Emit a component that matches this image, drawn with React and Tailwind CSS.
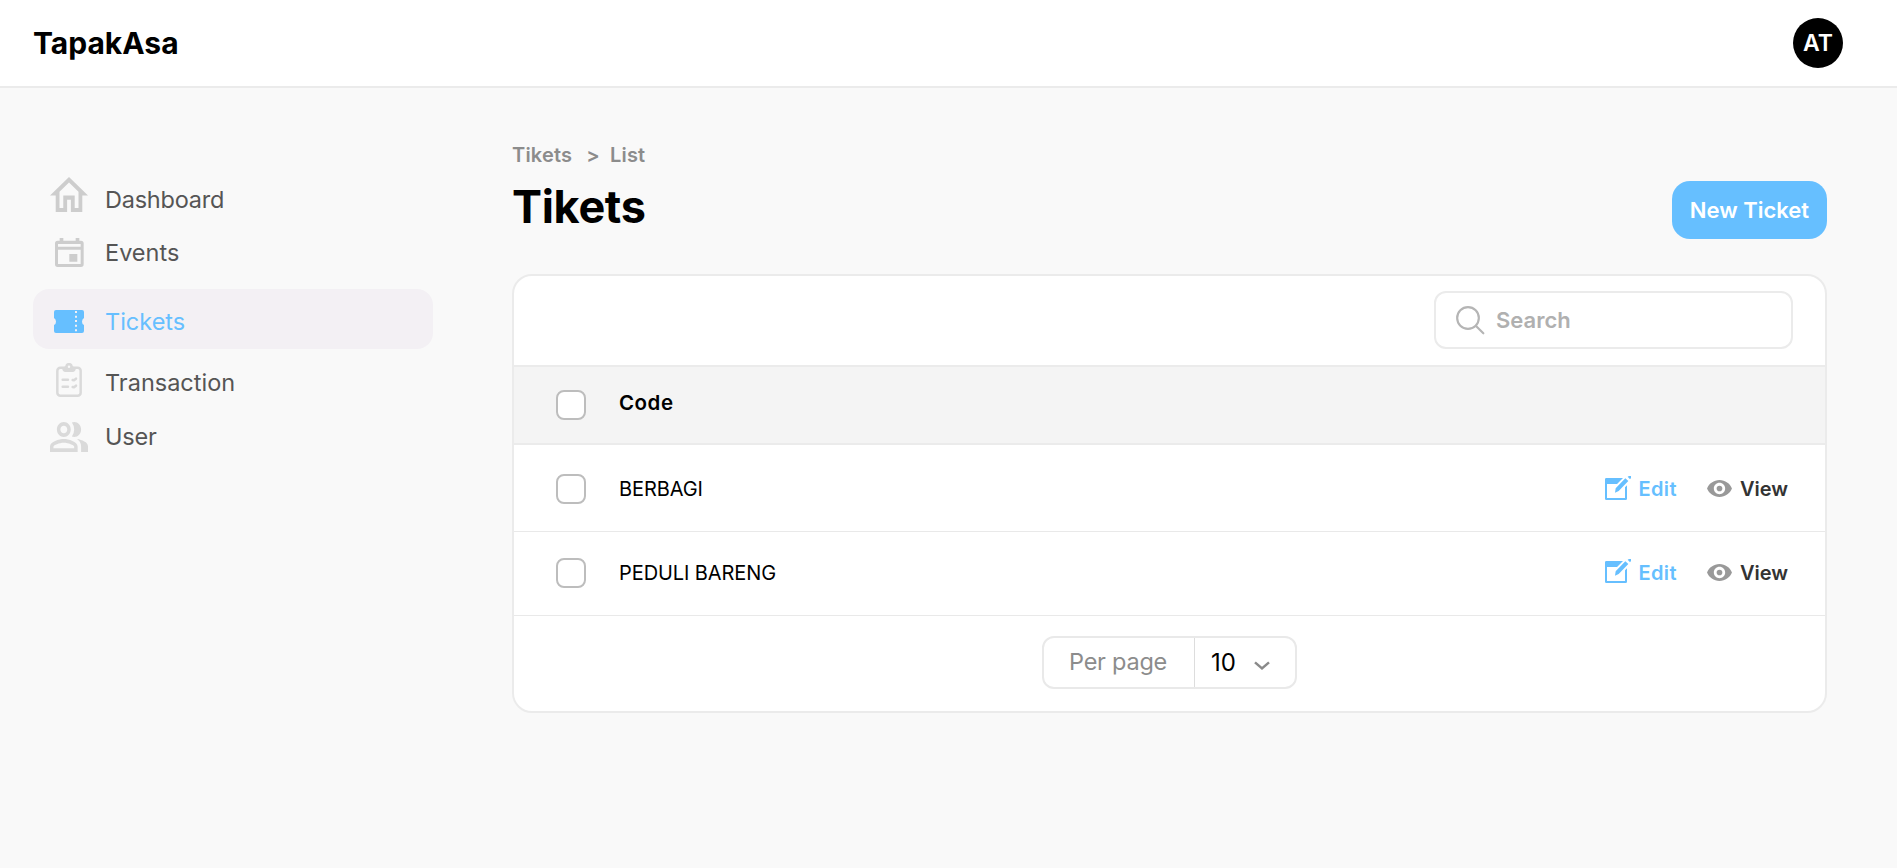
import React from "react";

const ICON = "block shrink-0";

function HomeIcon() {
  return (
    <svg className={ICON} width="38" height="35" viewBox="2 3 20 17" preserveAspectRatio="none" fill="#cdcdcd">
      <path d="M12 5.69l5 4.5V18h-2v-6H9v6H7v-7.81l5-4.5M12 3L2 12h3v8h6v-6h2v6h6v-8h3L12 3z" />
    </svg>
  );
}

function EventIcon() {
  return (
    <svg className={ICON} width="29" height="29" viewBox="0 0 87 87" fill="#cdcdcd">
      <path fillRule="evenodd" d="M14 0h11v8h37V0h11v8h5a8 8 0 0 1 8 8v63a8 8 0 0 1-8 8H8a8 8 0 0 1-8-8V16a8 8 0 0 1 8-8h6zM9 18v8h68v-8zM9 35v43h68V35zM43 48h24v23H43z" />
    </svg>
  );
}

function TicketIcon() {
  return (
    <svg className={ICON} width="30" height="23" viewBox="0 0 90 69" fill="#66bfff">
      <path fillRule="evenodd" d="M6 0h78a6 6 0 0 1 6 6v18q-6 4-6 11t6 10v18a6 6 0 0 1-6 6H6a6 6 0 0 1-6-6V45q6-3 6-10t-6-11V6a6 6 0 0 1 6-6zM63 3v6h6V3zM63 17v6h6v-6zM63 30v6h6v-6zM63 44v6h6v-6zM63 58v6h6v-6z" />
    </svg>
  );
}

function ClipboardIcon() {
  return (
    <svg className={ICON} width="26" height="34" viewBox="0 0 78 102" fill="none" stroke="#dadada" strokeWidth="7.5" strokeLinecap="round" strokeLinejoin="round">
      <rect x="4" y="14" width="70" height="84" rx="9" />
      <path d="M28 10h22l9 5a10 10 0 0 1-9 12H28a10 10 0 0 1-9-12z" fill="#dadada" stroke="none" />
      <circle cx="39" cy="11" r="7.5" fill="#f9f9f9" />
      <path d="M20 50h16M20 71h16M50 51l4 1 6-5M50 72l4 1 6-5" />
    </svg>
  );
}

function PeopleIcon() {
  return (
    <svg className={ICON} width="38" height="30" viewBox="1 4 22 16" preserveAspectRatio="none" fill="#dadada">
      <path d="M16.67 13.13C18.04 14.06 19 15.32 19 17v3h4v-3c0-2.18-3.57-3.47-6.33-3.87z" />
      <path d="M15 12c2.21 0 4-1.79 4-4s-1.79-4-4-4c-.47 0-.91.1-1.33.24a5.98 5.98 0 0 1 0 7.52c.42.14.86.24 1.33.24zM9 12c2.21 0 4-1.79 4-4s-1.79-4-4-4-4 1.79-4 4 1.79 4 4 4zm0-6c1.1 0 2 .9 2 2s-.9 2-2 2-2-.9-2-2 .9-2 2-2zM9 13c-2.67 0-8 1.34-8 4v3h16v-3c0-2.66-5.33-4-8-4zm6 5H3v-.99C3.2 16.29 6.3 15 9 15s5.8 1.29 6 2v1z" />
    </svg>
  );
}

function EditIcon() {
  return (
    <svg className={ICON} width="26" height="24" viewBox="0 0 78 72" fill="#66bfff">
      <path d="M4 6h50L36 24H6v42h54V34l6-6v40a4 4 0 0 1-4 4H4a4 4 0 0 1-4-4V10a4 4 0 0 1 4-4z" />
      <path d="M61 7l9 8-29 30-11 5 2-13zM68 2l4-2h6v6l-3 4z" />
    </svg>
  );
}

function EyeIcon() {
  return (
    <svg className={ICON} width="25" height="17" viewBox="1 4.5 22 15" fill="#999999">
      <path fillRule="evenodd" d="M12 4.5C7 4.5 2.73 7.61 1 12c1.73 4.39 6 7.5 11 7.5s9.27-3.11 11-7.5c-1.73-4.39-6-7.5-11-7.5zM12 17c-2.76 0-5-2.24-5-5s2.24-5 5-5 5 2.24 5 5-2.24 5-5 5z" />
      <circle cx="12" cy="12" r="2.5" />
    </svg>
  );
}

function SearchIcon() {
  return (
    <svg className={ICON} width="29" height="29" viewBox="0 0 87 87" fill="none" stroke="#b5b5b5" strokeWidth="6.5" strokeLinecap="round">
      <circle cx="36" cy="36" r="32.5" />
      <path d="M60 60l22 22" />
    </svg>
  );
}

function ChevronIcon() {
  return (
    <svg className={ICON} width="16" height="10" viewBox="0 0 48 30" fill="none" stroke="#8a8a8a" strokeWidth="7.5">
      <path d="M3 4l21 18L45 4" />
    </svg>
  );
}

const nav = [
  { label: "Dashboard", Icon: HomeIcon, row: "h-[42px] mt-[91px]", icon: "-mt-[11px]", text: "tracking-[-0.01em] text-[#555555]" },
  { label: "Events", Icon: EventIcon, row: "h-[42px] mt-[11px]", icon: "-mt-px", text: "text-[#555555]" },
  { label: "Tickets", Icon: TicketIcon, row: "h-[60px] mt-[15px] bg-[#f3f0f4] rounded-2xl", icon: "mt-[5px]", text: "mt-[5px] text-[#66bfff]" },
  { label: "Transaction", Icon: ClipboardIcon, row: "h-[42px] mt-[13px]", icon: "-mt-[6px]", text: "text-[#555555]" },
  { label: "User", Icon: PeopleIcon, row: "h-[42px] mt-[12px]", icon: "mt-0", text: "tracking-[-0.01em] text-[#555555]" },
];

function Sidebar() {
  return (
    <nav className="ml-[33px] w-[400px] shrink-0">
      {nav.map(({ label, Icon, row, icon, text }) => (
        <a key={label} className={`flex items-center pl-[17px] ${row}`}>
          <span className={`flex w-[38px] justify-center ${icon}`}>
            <Icon />
          </span>
          <span className={`ml-[17px] text-[23.5px] leading-[30px] ${text}`}>{label}</span>
        </a>
      ))}
    </nav>
  );
}

function Checkbox() {
  return <span className="size-[30px] shrink-0 rounded-lg border-2 border-[#bdbdbd] bg-white" />;
}

function Row({ code, className, editClassName }) {
  return (
    <div className={`flex items-center border-b border-[#e9e9e9] pl-[42px] pr-[37px] ${className}`}>
      <Checkbox />
      <span className="ml-[33px] grow text-[20px] leading-6 tracking-[-0.004em] text-black">{code}</span>
      <span className={editClassName}>
        <EditIcon />
      </span>
      <span className="ml-[7px] text-[20px] font-semibold leading-6 tracking-[0.02em] text-[#66bfff]">Edit</span>
      <span className="-mt-px ml-[30px]">
        <EyeIcon />
      </span>
      <span className="ml-[8px] text-[20px] font-semibold leading-6 text-[#333333]">View</span>
    </div>
  );
}

export default function App() {
  return (
    <div className="min-h-[868px] bg-[#f9f9f9] font-['Inter',sans-serif]">
      <header className="flex h-[88px] items-center justify-between border-b-2 border-[#ebebeb] bg-white pl-[33px] pr-[54px]">
        <h1 className="text-[30px] font-bold leading-9 text-black">TapakAsa</h1>
        <div className="flex size-[50px] items-center justify-center rounded-full bg-black text-[23px] font-semibold leading-none text-white">AT</div>
      </header>
      <div className="flex">
        <Sidebar />
        <main className="ml-[79px] w-[1315px]">
          <div className="mt-[55px] flex text-[20px] font-semibold leading-6 tracking-[0.01em] text-[#8c8c8c]">
            <span>Tikets</span>
            <span className="ml-[14px]">&gt;</span>
            <span className="ml-[10px]">List</span>
          </div>
          <div className="flex justify-between">
            <h2 className="mt-[13px] text-[45px] font-bold leading-[54px] tracking-[-0.007em] text-black">Tikets</h2>
            <button className="mt-[14px] h-[58px] w-[155px] rounded-[18px] bg-[#66bfff] text-[22px] font-semibold text-white">New Ticket</button>
          </div>
          <section className="mt-[35px] h-[439px] overflow-hidden rounded-[20px] border-2 border-[#ebebeb] bg-white">
            <div className="flex h-[91px] justify-end border-b-2 border-[#ebebeb] pr-[32px] pt-[15px]">
              <div className="flex h-[58px] w-[359px] items-center rounded-xl border-2 border-[#ebebeb] pl-[20px]">
                <SearchIcon />
                <span className="ml-[11px] text-[22px] font-semibold leading-7 text-[#b0b0b0]">Search</span>
              </div>
            </div>
            <div className="flex h-[78px] items-center border-b-2 border-[#ebebeb] bg-[#f4f4f4] pl-[42px]">
              <Checkbox />
              <span className="-mt-[4px] ml-[33px] text-[20.5px] font-semibold leading-6 tracking-[0.025em] text-black">Code</span>
            </div>
            <Row code="BERBAGI" className="h-[87px] pt-[2px]" editClassName="-mt-[2px]" />
            <Row code="PEDULI BARENG" className="h-[84px] pb-px" editClassName="-mt-[4px]" />
            <div className="flex justify-center pt-[20px]">
              <div className="flex h-[53px] w-[255px] rounded-xl border-2 border-[#e9e9e9] text-[23.5px] leading-[48px]">
                <span className="w-[151px] border-r border-[#dddddd] pl-[25px] tracking-[-0.01em] text-[#8c8c8c]">Per page</span>
                <span className="ml-[16px] mt-px text-[24px] text-black">10</span>
                <span className="ml-[18px] mt-[23px]">
                  <ChevronIcon />
                </span>
              </div>
            </div>
          </section>
        </main>
      </div>
    </div>
  );
}
